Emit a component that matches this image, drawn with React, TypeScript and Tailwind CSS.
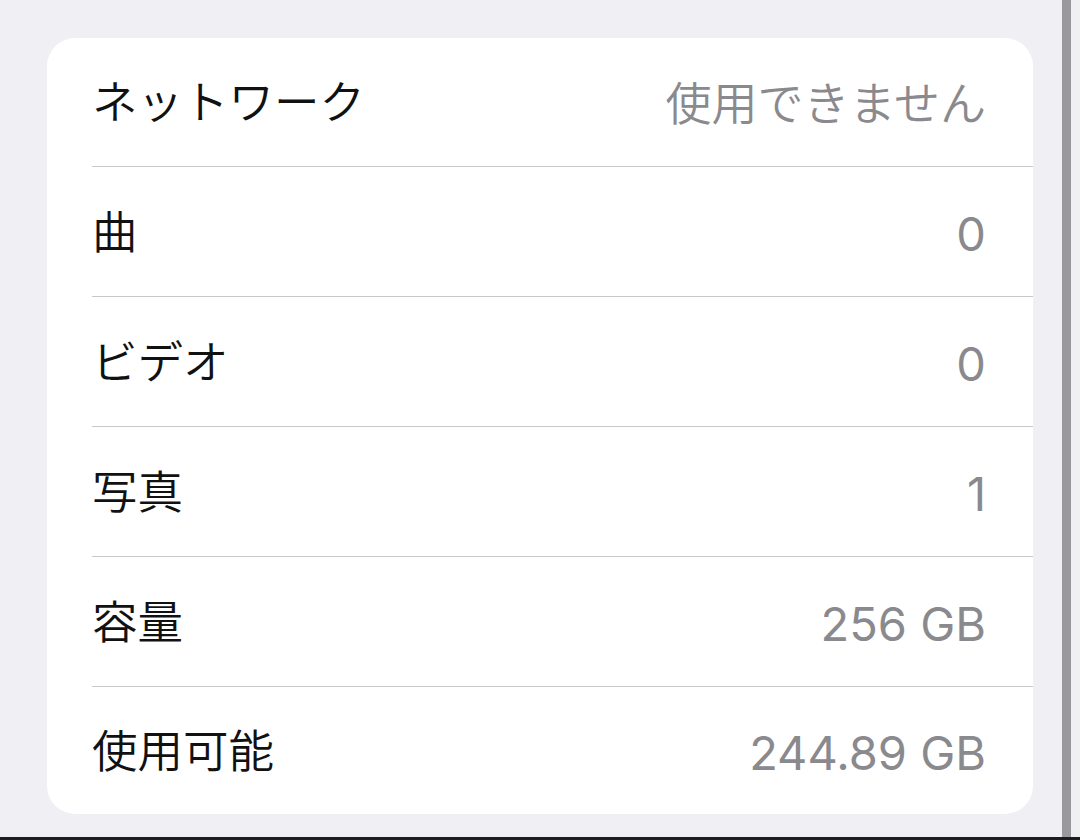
import React from "react";

const rows: { label: string; value: string; num: boolean }[] = [
  { label: "ネットワーク", value: "使用できません", num: false },
  { label: "曲", value: "0", num: true },
  { label: "ビデオ", value: "0", num: true },
  { label: "写真", value: "1", num: true },
  { label: "容量", value: "256 GB", num: true },
  { label: "使用可能", value: "244.89 GB", num: true },
];

export default function App() {
  return (
    <div
      className="w-[1080px] h-[840px] flex flex-col bg-[#efeff4] overflow-hidden"
      style={{ fontFamily: 'Inter, "Noto Sans CJK JP", sans-serif' }}
    >
      <div className="flex-1 flex flex-row">
        <div className="pl-[47px] pt-[38px]">
          <div className="w-[986px] bg-white rounded-[28px] overflow-hidden">
            {rows.map((r, i) => (
              <div
                key={r.label}
                className={
                  i === 0
                    ? "ml-[45px] pr-[47px] h-[128px] flex items-center justify-between"
                    : i === rows.length - 1
                    ? "ml-[45px] pr-[47px] h-[128px] flex items-center justify-between border-t border-[#c8c8cc]"
                    : "ml-[45px] pr-[47px] h-[130px] flex items-center justify-between border-t border-[#c8c8cc]"
                }
              >
                <span className="text-[45.5px] leading-none text-[#111111] font-[350] pt-[2px]">{r.label}</span>
                {r.num ? (
                  <span className="text-[47px] leading-none text-[#8a8a8e] font-normal pt-[4px]">
                    {r.value}
                  </span>
                ) : (
                  <span className="text-[46px] leading-none text-[#8a8a8e] font-[350] pt-[2px]">{r.value}</span>
                )}
              </div>
            ))}
          </div>
        </div>
        <div className="w-[29px]" />
        <div className="w-[9px] bg-[#98989d]" />
      </div>
      <div className="h-[3px] bg-[#1c1c1e]" />
    </div>
  );
}
